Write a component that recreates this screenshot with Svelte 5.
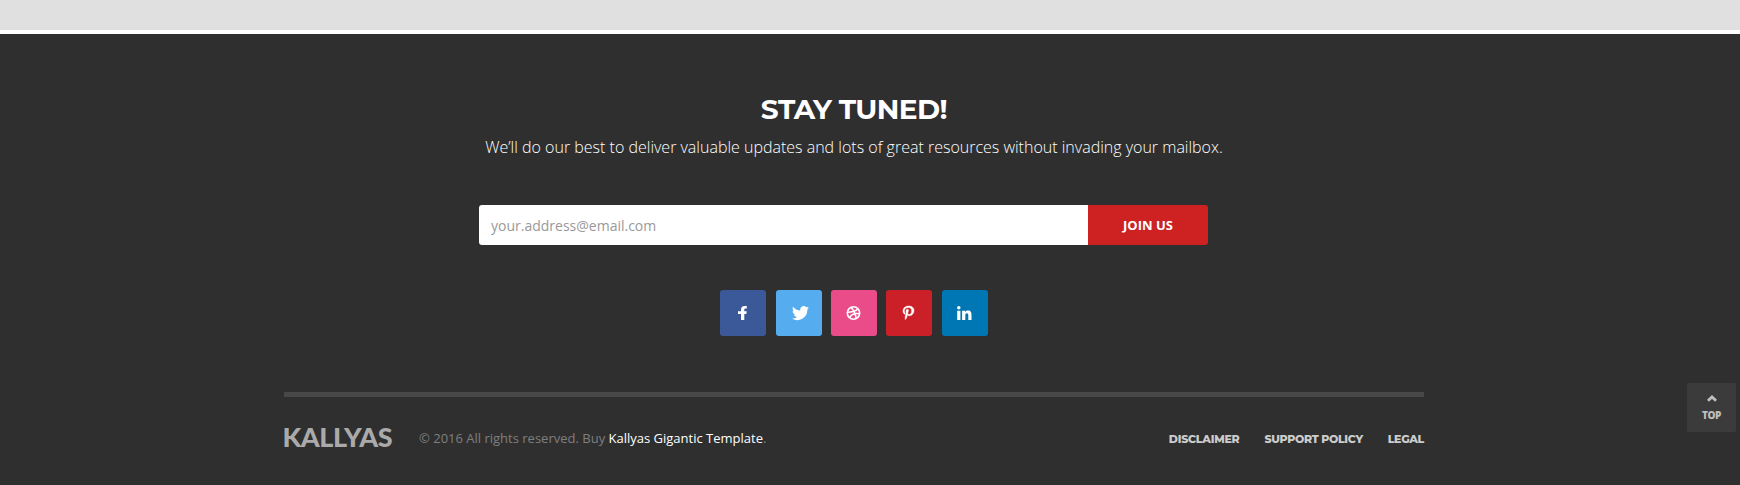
<script>
  const socials = [
    { name: 'Facebook', color: '#3b5998', path: 'M10.300 15V9h2l.5-2.700h-2.500V4.800c0-.8.300-1.200 1.200-1.200h1.300V1.100C12.400 1 11.800 1 11 1 8.500 1 7 2.200 7 4.400v1.900H4V9h3v6z' },
    { name: 'Twitter', color: '#55acee', path: 'M17 2.800c-.6.3-1.300.5-2 .6.700-.4 1.300-1.100 1.500-1.900-.7.4-1.400.7-2.200.8A3.500 3.500 0 0 0 8.300 5.500C5.400 5.400 2.800 4 1.100 1.800.2 3.400.700 5.400 2.200 6.500c-.6 0-1.100-.2-1.600-.4 0 1.700 1.200 3.100 2.800 3.400-.5.200-1.100.2-1.600.1.500 1.400 1.700 2.400 3.300 2.400A7 7 0 0 1 0 13.500 9.900 9.900 0 0 0 15.300 4.700c.7-.5 1.300-1.100 1.700-1.900z' },
    { name: 'Dribbble', color: '#ea4c89' },
    { name: 'Pinterest', color: '#cb2027', path: 'M8.600.7C4.600.7 2.500 3.300 2.500 6c0 1.300.7 2.900 1.800 3.400.3.100.3 0 .5-.8.100-.300.100-.400-.1-.600C3 5.700 4.400 2.300 8 2.300c5.300 0 4.300 7.500.9 7.500-.9 0-1.500-.7-1.300-1.600.2-1 .7-2.100.7-2.900 0-1.900-2.700-1.600-2.700.9 0 .8.300 1.300.3 1.300s-.9 3.700-1 4.400c-.3 1.200 0 3 0 3.100h.2c.1-.1 1.200-1.600 1.500-2.800l.6-2.300c.3.600 1.200 1.100 2.100 1.100 2.800 0 4.800-2.500 4.800-5.700C14.100 2.500 11.700.7 8.600.7z' },
    { name: 'LinkedIn', color: '#0077b5', path: 'M1.200 5.700h3.200V15H1.200zM2.800 1a1.750 1.750 0 1 1 0 3.500 1.750 1.750 0 0 1 0-3.500zM6.100 5.700H9.100V7c.5-.9 1.500-1.500 2.700-1.500 3.100 0 3.700 1.900 3.700 4.500v5h-3.200v-4.400c0-1.200-.1-2.400-1.400-2.400s-1.600 1-1.600 2.200V15H6.100z' }
  ];
  const links = ['DISCLAIMER', 'SUPPORT POLICY', 'LEGAL'];
</script>

<div class="page">
  <div class="band"></div>
  <footer>
    <h2><span>STAY TUNED!</span></h2>
    <p class="lead">We’ll do our best to deliver valuable updates and lots of great resources without invading your mailbox.</p>
    <form onsubmit={(e) => e.preventDefault()}>
      <input type="text" placeholder="your.address@email.com" aria-label="Email" />
      <button><span>JOIN US</span></button>
    </form>
    <div class="socials">
      {#each socials as s}
        <a href="#top" aria-label={s.name} style:background={s.color}>
          <svg class={s.name.toLowerCase()} viewBox="0 0 17 16" width="17" height="16">
            {#if s.path}
              <path d={s.path} fill="#fff" />
            {:else}
              <g fill="none" stroke="#fff" stroke-width="1.600">
                <circle cx="8.500" cy="8" r="6.200" />
                <path d="M6.200 2.200C9 5.500 10.500 9 11.200 13.600M2.200 7.200C7 7.200 10.500 6.400 13 3.700M4.500 12.800C6.300 9.200 10 7.800 14.800 8.800" />
              </g>
            {/if}
          </svg>
        </a>
      {/each}
    </div>
    <div class="bottom">
      <span class="logo">KALLYAS</span>
      <span class="copy">© 2016 All rights reserved. Buy <a href="#top">Kallyas Gigantic Template</a>.</span>
      <nav>
        {#each links as l}<a href="#top">{l}</a>{/each}
      </nav>
    </div>
  </footer>
  <a class="totop" href="#top">
    <svg width="10" height="7" viewBox="0 0 10 7"><path d="M.900 5.800 5 2l4.100 3.800" fill="none" stroke="#bebebe" stroke-width="2.800" /></svg>
    <span>TOP</span>
  </a>
</div>

<style>
  :global(body) { margin: 0; background: #2f2f2f; }
  .page { height: 485px; overflow: hidden; background: #2f2f2f; font-family: "Open Sans", sans-serif; }
  .page, .page * { box-sizing: border-box; }
  a { text-decoration: none; }
  .band { height: 34px; background: #e0e0e0; border-bottom: 4px solid #fff; }
  footer { width: 1140px; margin: 0 0 0 284px; }
  h2 { margin: 0; padding-top: 55px; height: 95px; font: 700 28px/40px Montserrat, Lato, sans-serif; letter-spacing: -.55px; color: #fff; text-align: center; white-space: nowrap; }
  .lead { margin: 0; height: 36px; font-size: 16px; line-height: 36px; font-weight: 300; color: #fff; text-align: center; white-space: nowrap; }
  form { display: flex; width: 729px; height: 40px; margin: 40px 0 0 195px; }
  input { width: 609px; height: 40px; border: 0; border-radius: 3px 0 0 3px; padding: 0 12px; background: #fff; font: 400 14px "Open Sans", sans-serif; outline: 0; }
  input::placeholder { color: #999; opacity: 1; }
  button { width: 120px; height: 40px; padding: 0; border: 0; border-radius: 0 3px 3px 0; background: #cd2122; color: #fff; font: 700 13px "Open Sans", sans-serif; }
  .socials { display: flex; gap: 9px; margin: 45px 0 0 436px; height: 46px; }
  .socials a { width: 46px; height: 46px; border-radius: 3px; display: flex; align-items: center; justify-content: center; }
  .socials a:first-child { margin-right: 1px; }
  .socials a:last-child { margin-left: 1px; }
  .socials svg { display: block; margin-right: 1px; }
  .socials .twitter { margin: 0 0 0 3px; }
  .socials .pinterest path { transform: translate(.6px, .3px) scale(.95); stroke: #fff; stroke-width: .5; }
  .bottom { margin-top: 56px; height: 93px; border-top: 5px solid #484848; display: flex; align-items: flex-start; white-space: nowrap; }
  .logo { width: 136.500px; margin-left: -1.500px; padding-top: 24px; font: 900 27px/32px Lato, sans-serif; letter-spacing: -.45px; color: #aaa; }
  .copy { padding-top: 31px; font-size: 13px; line-height: 20px; color: #7f7f7f; }
  .copy a { color: #fff; }
  nav { margin-left: auto; padding-top: 32px; display: flex; gap: 25px; }
  nav a { font: 800 11px/20px Montserrat, Lato, sans-serif; letter-spacing: -.33px; color: #ccc; }
  nav a:first-child { letter-spacing: -.25px; }
  .totop { position: fixed; left: 1687px; top: 383px; width: 49px; height: 49px; border-radius: 2px; background: #3b3b3b; display: flex; flex-direction: column; align-items: center; padding-top: 12px; }
  .totop span { margin-top: 5px; font: 800 10px/16px "Open Sans", sans-serif; letter-spacing: -.4px; color: #bebebe; }
</style>
